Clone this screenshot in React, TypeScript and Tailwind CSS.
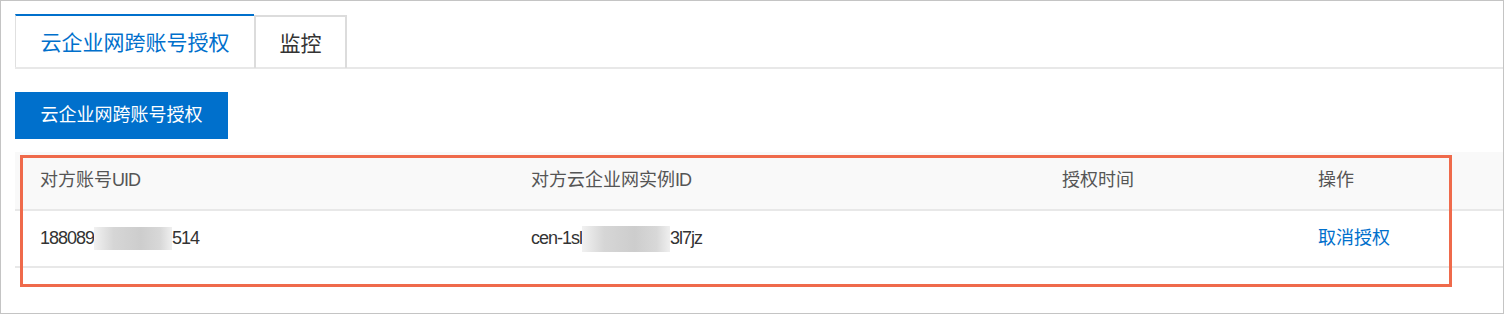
import React from "react";

const FONT = "font-['Liberation_Sans','Noto_Sans_CJK_SC',sans-serif]";

const Latin = ({ children }: { children: React.ReactNode }) => (
    <span className="tracking-[-1px]">{children}</span>
);

const Redacted = ({ w, h }: { w: string; h: string }) => (
    <span
        className={`inline-block align-middle ${w} ${h} bg-[linear-gradient(90deg,#f1f1f1,#d6d6d6_25%,#cdcdcd_60%,#d8d8d8_85%,#efefef)]`}
    />
);

const columns = "grid grid-cols-[491px_531px_256px_1fr]";

export default function App() {
    return (
        <div className={`relative w-[1504px] h-[314px] border border-[#c4c4c4] bg-white ${FONT}`}>
            {/* Tabs */}
            <div className="ml-[14px] mt-[13px] flex items-end border-b-2 border-[#e8e8e8]">
                <div className="flex h-[53px] w-[239px] items-center justify-center border-t-2 border-l border-t-[#0070cc] border-l-[#e0e0e0] pt-[2px] text-[21px] text-[#0070cc]">
                    云企业网跨账号授权
                </div>
                <div className="-mb-[1px] flex h-[53px] w-[93px] items-center justify-center border-2 border-b-0 border-[#dcdcdc] pt-[2px] text-[21px] text-[#333]">
                    监控
                </div>
            </div>

            {/* Primary action */}
            <button className="ml-[14px] mt-[23px] flex h-[47px] w-[213px] items-center justify-center bg-[#0070cc] text-[18px] text-white">
                云企业网跨账号授权
            </button>

            {/* Table */}
            <div className="ml-[14px] mt-[13px] text-[18px]">
                <div className={`${columns} h-[59px] items-center border-b-2 border-[#e8e8e8] bg-[#f9f9f9] text-[#555]`}>
                    <div className="pl-[25px]">
                        对方账号<Latin>UID</Latin>
                    </div>
                    <div className="pl-[25px]">
                        对方云企业网实例<Latin>ID</Latin>
                    </div>
                    <div className="pl-[25px]">授权时间</div>
                    <div className="pl-[25px]">操作</div>
                </div>
                <div className={`${columns} h-[57px] items-center border-b-2 border-[#e8e8e8] text-[#333]`}>
                    <div className="flex items-center pl-[25px]">
                        <Latin>188089</Latin>
                        <Redacted w="w-[78px]" h="h-[23px]" />
                        <Latin>514</Latin>
                    </div>
                    <div className="flex items-center pl-[25px]">
                        <Latin>cen-1sl</Latin>
                        <Redacted w="w-[88px]" h="h-[26px]" />
                        <Latin>3l7jz</Latin>
                    </div>
                    <div className="pl-[25px]" />
                    <div className="pl-[25px]">
                        <a className="cursor-pointer text-[#0070cc]">取消授权</a>
                    </div>
                </div>
            </div>

            {/* Highlight frame */}
            <div className="pointer-events-none absolute left-[19px] top-[154px] h-[132px] w-[1432px] border-[3px] border-[#ef6a4b]" />
        </div>
    );
}
